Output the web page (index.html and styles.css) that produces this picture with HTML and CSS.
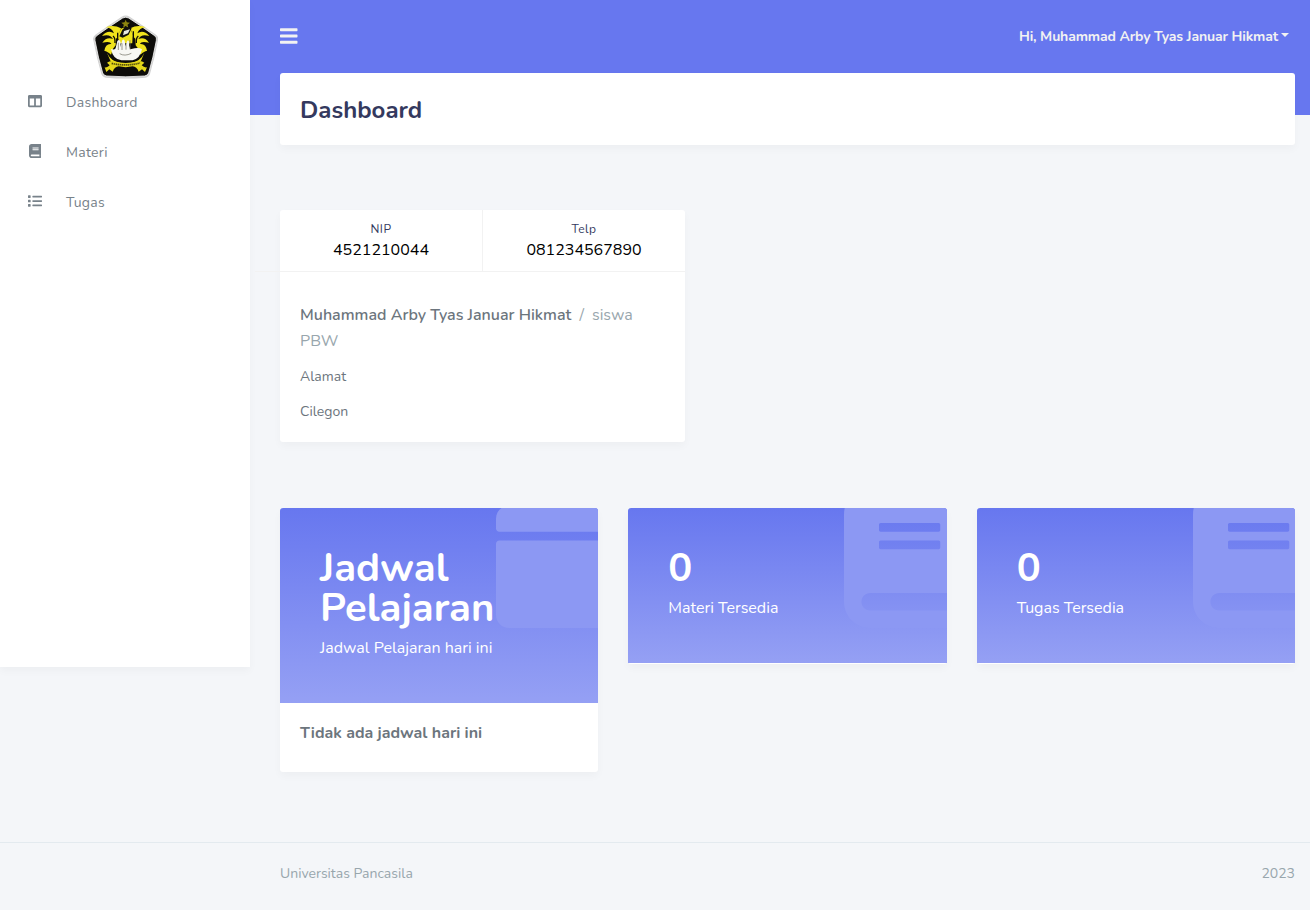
FILE: index.html
```html
<!DOCTYPE html>
<html lang="id">
<head>
<meta charset="utf-8">
<title>Dashboard</title>
<link rel="stylesheet" href="styles.css">
</head>
<body>
<div class="app">
  <aside class="sidebar">
    <svg class="logo" viewBox="24 21 195 192" aria-label="Universitas Pancasila">
      <path d="M110 26Q122 19 134 26 176 54 213 80 222 87 219 97 209 150 195 198 191 208 181 209 122 214 63 209 53 208 49 198 35 150 25 97 22 87 31 80 68 54 110 26Z" fill="#d2d2d2"/>
      <path d="M113 30Q122 25 131 30 173 57 209 83 217 89 214 98 205 148 191 195 188 203 179 204 122 209 65 204 56 203 53 195 39 148 30 98 27 89 35 83 71 57 113 30Z" fill="#0d0c09" stroke="#f4f4f4" stroke-width="2.500"/>
      <path d="m122 35 3.4 8 9.600 1-7.500 6 2.500 9-8-5-8 5 2.500-9-7.500-6 9.600-1Z" fill="#8d850f"/>
      <g fill="#f0e31c">
        <path d="M108 61Q86 48 62 58 81 59 87 76 69 64 51 84 75 76 84 93 65 85 52 104 76 98 79 108 61 106 58 129 63 127 78 140L84 122 92 112 93 92 99 86Z"/>
        <path d="M136 61Q158 48 182 58 163 59 157 76 175 64 193 84 169 76 160 93 179 85 192 104 168 98 165 108 183 106 186 129 181 127 166 140L160 122 152 112 151 92 145 86Z"/>
        <path d="M108 62Q118 56 136 62L144 82 142 106H104L98 84Z"/>
        <path d="M66 134Q78 162 111 166H133Q166 162 178 134L168 158Q148 170 122 169 96 170 76 158Z"/>
      </g>
      <path d="m112 65 9-9 19 5-9 19-18 9-10-4Z" fill="#12110c"/>
      <path d="m117 69 18-5-6 12-15 6Z" fill="#e9e9df"/>
      <path d="M78 123Q91 127 92 120L97 99Q104 91 107 104L106 117 112 96Q119 91 120 105L120 115 127 98Q134 96 132 112L136 124 149 121Q162 118 171 124 165 152 143 157H109Q84 154 78 123Z" fill="#f7f7f3"/>
      <path d="M100 104v22m11-20v20m12-21v20m12-29v28M104 137q15 9 35-1" fill="none" stroke="#77766a" stroke-width="2.200"/>
      <path d="M84 84q7 5 6 21m70-21q-7 5-6 21M145 70v38M98 74v15" fill="none" stroke="#0d0c09" stroke-width="4"/>
      <path d="M66 164Q76 156 88 160 122 170 157 160 169 156 178 164L170 172Q178 180 186 178L180 192 171 184 161 191Q155 176 143 175 122 180 101 175 89 176 83 191L73 184 64 192 59 178Q67 180 74 172Z" fill="#e4d71a"/>
      <path d="M80 166Q122 176 165 165" fill="none" stroke="#4a450c" stroke-width="5" stroke-dasharray="4 2"/>
    </svg>
    <nav class="menu">
      <a class="menu-item"><span class="menu-icon"><svg class="ico" viewBox="0 0 512 512"><path d="M464 32H48C21.5 32 0 53.5 0 80v352c0 26.5 21.5 48 48 48h416c26.5 0 48-21.5 48-48V80c0-26.5-21.5-48-48-48zM224 416H64V160h160v256zm224 0H288V160h160v256z"/></svg></span>Dashboard</a>
      <a class="menu-item"><span class="menu-icon"><svg class="ico" viewBox="0 0 448 512"><path d="M448 360V24c0-13.3-10.7-24-24-24H96C43 0 0 43 0 96v320c0 53 43 96 96 96h328c13.3 0 24-10.7 24-24v-16c0-7.5-3.5-14.3-8.9-18.7-4.2-15.4-4.2-59.3 0-74.7 5.4-4.3 8.9-11.1 8.9-18.6zM128 134c0-3.3 2.7-6 6-6h212c3.3 0 6 2.7 6 6v20c0 3.3-2.7 6-6 6H134c-3.3 0-6-2.7-6-6v-20zm0 64c0-3.3 2.7-6 6-6h212c3.3 0 6 2.7 6 6v20c0 3.3-2.7 6-6 6H134c-3.3 0-6-2.7-6-6v-20zm253.4 250H96c-17.7 0-32-14.3-32-32 0-17.6 14.4-32 32-32h285.4c-1.9 17.1-1.9 46.9 0 64z"/></svg></span>Materi</a>
      <a class="menu-item"><span class="menu-icon"><svg class="ico" viewBox="0 0 512 512"><path d="M80 368H16a16 16 0 0 0-16 16v64a16 16 0 0 0 16 16h64a16 16 0 0 0 16-16v-64a16 16 0 0 0-16-16zm0-320H16A16 16 0 0 0 0 64v64a16 16 0 0 0 16 16h64a16 16 0 0 0 16-16V64a16 16 0 0 0-16-16zm0 160H16a16 16 0 0 0-16 16v64a16 16 0 0 0 16 16h64a16 16 0 0 0 16-16v-64a16 16 0 0 0-16-16zm416 176H176a16 16 0 0 0-16 16v32a16 16 0 0 0 16 16h320a16 16 0 0 0 16-16v-32a16 16 0 0 0-16-16zm0-320H176a16 16 0 0 0-16 16v32a16 16 0 0 0 16 16h320a16 16 0 0 0 16-16V80a16 16 0 0 0-16-16zm0 160H176a16 16 0 0 0-16 16v32a16 16 0 0 0 16 16h320a16 16 0 0 0 16-16v-32a16 16 0 0 0-16-16z"/></svg></span>Tugas</a>
    </nav>
  </aside>
  <div class="content">
    <header class="navbar">
      <svg class="bars" viewBox="0 0 448 512"><path d="M16 132h416c8.837 0 16-7.163 16-16V76c0-8.837-7.163-16-16-16H16C7.163 60 0 67.163 0 76v40c0 8.837 7.163 16 16 16zm0 160h416c8.837 0 16-7.163 16-16v-40c0-8.837-7.163-16-16-16H16c-8.837 0-16 7.163-16 16v40c0 8.837 7.163 16 16 16zm0 160h416c8.837 0 16-7.163 16-16v-40c0-8.837-7.163-16-16-16H16c-8.837 0-16 7.163-16 16v40c0 8.837 7.163 16 16 16z"/></svg>
      <a class="user">Hi, Muhammad Arby Tyas Januar Hikmat<span class="caret"></span></a>
    </header>
    <main>
      <section class="title-card"><h1>Dashboard</h1></section>
      <section class="profile">
        <div class="stats">
          <div class="stat"><div class="stat-label">NIP</div><div class="stat-value">4521210044</div></div>
          <div class="stat"><div class="stat-label">Telp</div><div class="stat-value">081234567890</div></div>
        </div>
        <div class="profile-body">
          <div class="profile-name">Muhammad Arby Tyas Januar Hikmat<span class="role"><span class="slash">/</span>siswa<br>PBW</span></div>
          <p>Alamat</p>
          <p>Cilegon</p>
        </div>
      </section>
      <div class="heroes">
        <section class="hero">
          <div class="hero-head">
            <svg class="hero-icon" viewBox="0 0 448 512"><path d="M12 192h424c6.6 0 12 5.4 12 12v260c0 26.5-21.5 48-48 48H48c-26.5 0-48-21.5-48-48V204c0-6.6 5.4-12 12-12zm436-44v-36c0-26.5-21.5-48-48-48h-48V12c0-6.6-5.4-12-12-12h-40c-6.6 0-12 5.4-12 12v52H160V12c0-6.6-5.4-12-12-12h-40c-6.6 0-12 5.4-12 12v52H48C21.5 64 0 85.5 0 112v36c0 6.6 5.4 12 12 12h424c6.6 0 12-5.4 12-12z"/></svg>
            <h2>Jadwal Pelajaran</h2>
            <div class="hero-text">Jadwal Pelajaran hari ini</div>
          </div>
          <div class="hero-body">Tidak ada jadwal hari ini</div>
        </section>
        <section class="hero">
          <div class="hero-head">
            <svg class="hero-icon" viewBox="0 0 448 512"><path d="M448 360V24c0-13.3-10.7-24-24-24H96C43 0 0 43 0 96v320c0 53 43 96 96 96h328c13.3 0 24-10.7 24-24v-16c0-7.5-3.5-14.3-8.9-18.7-4.2-15.4-4.2-59.3 0-74.7 5.4-4.3 8.9-11.1 8.9-18.6zM128 134c0-3.3 2.7-6 6-6h212c3.3 0 6 2.7 6 6v20c0 3.3-2.7 6-6 6H134c-3.3 0-6-2.7-6-6v-20zm0 64c0-3.3 2.7-6 6-6h212c3.3 0 6 2.7 6 6v20c0 3.3-2.7 6-6 6H134c-3.3 0-6-2.7-6-6v-20zm253.4 250H96c-17.7 0-32-14.3-32-32 0-17.6 14.4-32 32-32h285.4c-1.9 17.1-1.9 46.9 0 64z"/></svg>
            <h2>0</h2>
            <div class="hero-text">Materi Tersedia</div>
          </div>
        </section>
        <section class="hero">
          <div class="hero-head">
            <svg class="hero-icon" viewBox="0 0 448 512"><path d="M448 360V24c0-13.3-10.7-24-24-24H96C43 0 0 43 0 96v320c0 53 43 96 96 96h328c13.3 0 24-10.7 24-24v-16c0-7.5-3.5-14.3-8.9-18.7-4.2-15.4-4.2-59.3 0-74.7 5.4-4.3 8.9-11.1 8.9-18.6zM128 134c0-3.3 2.7-6 6-6h212c3.3 0 6 2.7 6 6v20c0 3.3-2.7 6-6 6H134c-3.3 0-6-2.7-6-6v-20zm0 64c0-3.3 2.7-6 6-6h212c3.3 0 6 2.7 6 6v20c0 3.3-2.7 6-6 6H134c-3.3 0-6-2.7-6-6v-20zm253.4 250H96c-17.7 0-32-14.3-32-32 0-17.6 14.4-32 32-32h285.4c-1.9 17.1-1.9 46.9 0 64z"/></svg>
            <h2>0</h2>
            <div class="hero-text">Tugas Tersedia</div>
          </div>
        </section>
      </div>
    </main>
  </div>
</div>
<footer class="footer"><span>Universitas Pancasila</span><span>2023</span></footer>
</body>
</html>
```
FILE: styles.css
```css
* { box-sizing: border-box; }
body {
  margin: 0;
  height: 910px;
  overflow: hidden;
  display: flex;
  flex-direction: column;
  background: #f4f6f9;
  color: #6c757d;
  font: 400 14px/24px Nunito, "Open Sans", sans-serif;
}
h1, h2, p { margin: 0; }
svg { display: block; fill: currentColor; }

.app {
  display: flex;
  align-items: flex-start;
  height: 842px;
  background: linear-gradient(#6777ef, #6777ef) 0 0 / 100% 115px no-repeat;
}

.sidebar {
  width: 250px;
  height: 667px;
  flex: none;
  padding-top: 15px;
  background: #fff;
  box-shadow: 0 4px 8px rgba(0, 0, 0, .03);
}
.logo { width: 65px; height: 64px; margin: 0 auto; }
.menu { display: flex; flex-direction: column; margin-top: -2px; }
.menu-item {
  display: flex;
  align-items: center;
  height: 50px;
  padding: 1px 0 0 20px;
  color: #78828a;
  letter-spacing: .3px;
}
.menu-icon {
  display: flex;
  justify-content: center;
  width: 30px;
  margin-right: 16px;
  padding-bottom: 3px;
}
.ico { height: 14px; }

.content { flex: 1; padding: 0 15px 0 30px; }
.navbar {
  display: flex;
  justify-content: space-between;
  align-items: center;
  height: 73px;
  padding-right: 6px;
  color: #f2f2f2;
}
.bars { height: 20px; margin-bottom: 2px; }
.user { display: flex; align-items: center; font-weight: 700; letter-spacing: -.13px; }
.caret {
  margin: 0 0 3px 3px;
  border: 4px solid transparent;
  border-top-color: currentColor;
  border-bottom: 0;
}

.title-card {
  height: 72px;
  padding: 20px;
  border-radius: 3px;
  background: #fff;
  box-shadow: 0 4px 8px rgba(0, 0, 0, .03);
}
.title-card h1 { font-size: 24px; line-height: 34px; font-weight: 700; color: #34395e; }

.profile {
  width: 405px;
  height: 232px;
  margin-top: 65px;
  border-radius: 3px;
  background: #fff;
  box-shadow: 0 4px 8px rgba(0, 0, 0, .03);
}
.stats { display: flex; position: relative; height: 62px; }
.stats::after {
  content: "";
  position: absolute;
  left: -25px;
  right: 0;
  bottom: 0;
  height: 1px;
  background: #f2f2f2;
}
.stat { flex: 1; padding-top: 10px; text-align: center; }
.stat:first-child { border-right: 1px solid #f2f2f2; }
.stat-label { font-size: 12px; line-height: 18px; letter-spacing: .5px; color: #34395e; }
.stat-value { font-size: 16px; line-height: 24px; color: #000; }
.profile-body { padding: 30px 20px 0; }
.profile-name { margin-bottom: 10px; font-size: 16px; line-height: 26px; font-weight: 600; }
.role { font-weight: 400; color: #98a6ad; }
.slash { margin: 0 8px; }
.profile-body p { height: 35px; line-height: 25px; }

.heroes {
  display: grid;
  grid-template-columns: repeat(3, 1fr);
  gap: 30px;
  align-items: start;
  margin-top: 66px;
}
.hero {
  padding-bottom: .5px;
  border-radius: 3px;
  background: #fff;
  box-shadow: 0 4px 8px rgba(0, 0, 0, .03);
}
.hero-head {
  position: relative;
  overflow: hidden;
  padding: 40px 40px 43px;
  border-radius: 3px 3px 0 0;
  background: linear-gradient(to bottom, #6777ef, #95a0f4);
  color: #fff;
}
.hero-icon {
  position: absolute;
  top: -20.5px;
  right: -20px;
  height: 140px;
  color: #8c98f3;
}
.hero-head h2 { position: relative; font-size: 40px; line-height: 40px; font-weight: 700; }
.hero-text { position: relative; margin-top: 8px; font-size: 16px; line-height: 24px; }
.hero-body { height: 68px; padding: 18px 20px; font-size: 16px; font-weight: 700; }

.footer {
  display: flex;
  justify-content: space-between;
  height: 68px;
  padding: 19px 15px 0 280px;
  border-top: 1px solid #e3eaef;
  color: #98a6ad;
}
```
